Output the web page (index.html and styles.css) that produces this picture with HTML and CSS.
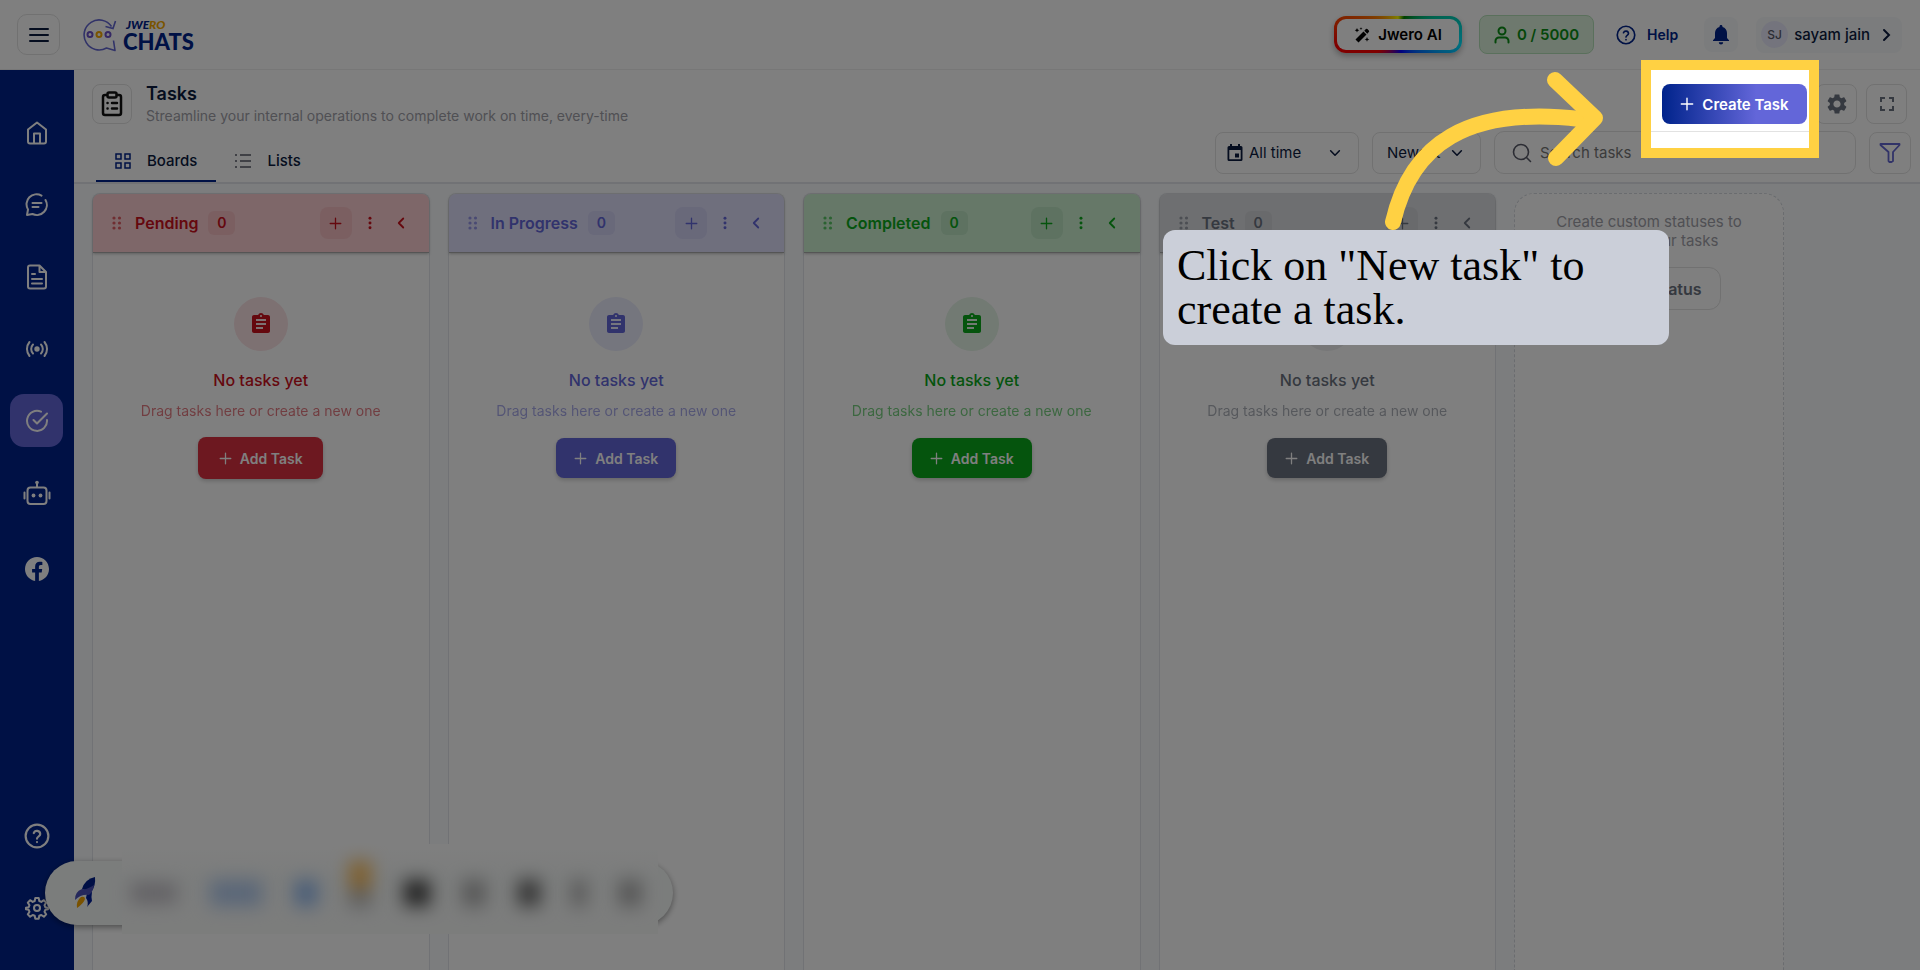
FILE: index.html
```html
<!DOCTYPE html>
<html lang="en">
<head>
  <meta charset="UTF-8">
  <title>Jwero Chats - Tasks</title>
  <link rel="stylesheet" href="styles.css">
</head>
<body>
  <!-- icons -->
  <svg class="sprite" aria-hidden="true">
    <symbol id="i-plus" viewBox="0 0 16 16"><path d="M8 1.500v13M1.500 8h13" fill="none" stroke="currentColor" stroke-width="1.6" stroke-linecap="round"/></symbol>
    <symbol id="i-more" viewBox="0 0 16 16"><circle cx="8" cy="2.600" r="1.700"/><circle cx="8" cy="8" r="1.700"/><circle cx="8" cy="13.400" r="1.700"/></symbol>
    <symbol id="i-left" viewBox="0 0 16 16"><path d="M10 4L6 8l4 4" fill="none" stroke="currentColor" stroke-width="1.600" stroke-linecap="round" stroke-linejoin="round"/></symbol>
    <symbol id="i-down" viewBox="0 0 16 16"><path d="M3 5.500l5 5 5-5" fill="none" stroke="currentColor" stroke-width="1.800" stroke-linecap="round" stroke-linejoin="round"/></symbol>
    <symbol id="i-grip" viewBox="0 0 12 16"><circle cx="3" cy="3" r="1.600"/><circle cx="3" cy="8" r="1.600"/><circle cx="3" cy="13" r="1.600"/><circle cx="8.500" cy="3" r="1.600"/><circle cx="8.500" cy="8" r="1.600"/><circle cx="8.500" cy="13" r="1.600"/></symbol>
    <symbol id="i-clip" viewBox="0 0 24 24"><path d="M19 3h-4.180C14.400 1.840 13.300 1 12 1s-2.400.84-2.820 2H5c-1.100 0-2 .9-2 2v14c0 1.100.9 2 2 2h14c1.100 0 2-.9 2-2V5c0-1.100-.9-2-2-2zm-7 0c.55 0 1 .45 1 1s-.45 1-1 1-1-.45-1-1 .45-1 1-1zm2 14H7v-2h7v2zm3-4H7v-2h10v2zm0-4H7V7h10v2z"/></symbol>
    <symbol id="i-help" viewBox="0 0 24 24"><g fill="none" stroke="currentColor" stroke-width="2" stroke-linecap="round" stroke-linejoin="round"><circle cx="12" cy="12" r="10.500"/><path d="M9 9.300a3.100 3.100 0 0 1 6 .9c0 2-3 2.500-3 4.300M12 17.500v.1"/></g></symbol>
  </svg>

  <header class="app-header">
    <button class="menu-btn" aria-label="Menu">
      <svg width="20" height="16" viewBox="0 0 20 16"><path d="M1 2h18M1 8h18M1 14h18" stroke="#0b1b3f" stroke-width="2" stroke-linecap="round"/></svg>
    </button>
    <a class="logo" href="#">
      <svg width="34" height="36" viewBox="0 0 34 36" fill="none">
        <path d="M28.500 9.500A15 15 0 1 0 23.500 31l8.500 2.500-1.500-10" stroke="#6366d1" stroke-width="1.600" stroke-linejoin="round"/>
        <path d="M22.500 9.500l7.500 2L32.500 4" stroke="#6366d1" stroke-width="1.600"/>
        <circle cx="7" cy="17.500" r="2.500" stroke="#6a50c8" stroke-width="2"/><circle cx="16" cy="17.500" r="2.500" stroke="#f5a800" stroke-width="2"/><circle cx="25" cy="17.500" r="2.500" stroke="#6a50c8" stroke-width="2"/>
      </svg>
      <span class="logo-text"><i>JWE<b>RO</b></i><strong>CHATS</strong></span>
    </a>
    <div class="header-right">
      <button class="ai-btn">
        <svg width="16" height="16" viewBox="0 0 16 16"><path d="M1.500 12.500l8-8 3 3-8 8zM10.300 3.700l1.600-1.600q.7-.7 1.500 0l1.400 1.400q.8.800 0 1.600l-1.500 1.600zM3 1l.7 1.600 1.600.7-1.600.7L3 5.600 2.300 4 .7 3.300l1.600-.7zM7 0l.4 1.200 1.200.4-1.200.4L7 3.200l-.4-1.200-1.200-.4 1.200-.4zM13 10l.7 1.700 1.700.7-1.700.7-.7 1.700-.7-1.700-1.700-.7 1.700-.7z"/></svg>
        Jwero AI
      </button>
      <div class="credits">
        <svg width="16" height="18" viewBox="0 0 16 18" fill="none" stroke="currentColor" stroke-width="2" stroke-linecap="round"><circle cx="8" cy="5" r="3.500"/><path d="M1.500 16.500v-1.500a3.500 3.500 0 0 1 3.500-3.500h6a3.500 3.500 0 0 1 3.500 3.500v1.500"/></svg>
        0 / 5000
      </div>
      <a class="help" href="#"><svg width="20" height="20"><use href="#i-help"/></svg>Help</a>
      <button class="bell" aria-label="Notifications">
        <svg width="18" height="20" viewBox="0 0 18 20"><path d="M9 0c.9 0 1.500.6 1.500 1.500v.4c2.800.7 4.500 3 4.500 6.100v5l2 2.200V16H1v-.8L3 13V8c0-3.100 1.700-5.400 4.500-6.100v-.4C7.500.6 8.100 0 9 0zM6.800 17.300h4.400a2.200 2.200 0 0 1-4.400 0z"/></svg>
      </button>
      <button class="user"><span class="avatar">SJ</span>sayam jain
        <svg width="10" height="16" viewBox="0 0 10 16"><path d="M2 3l5 5-5 5" fill="none" stroke="currentColor" stroke-width="2" stroke-linecap="round"/></svg>
      </button>
    </div>
  </header>

  <div class="layout">
    <nav class="sidebar">
      <a href="#" aria-label="Home"><svg width="22" height="24" viewBox="0 0 22 24"><path d="M2 8.500L11 1.500l9 7v12q0 2-2 2H4q-2 0-2-2zM8 22v-9.500h6V22"/></svg></a>
      <a href="#" aria-label="Chats"><svg width="24" height="24" viewBox="0 0 24 24"><path d="M16.500 2.600A10 10 0 0 0 3 16.500L2 22l5.500-1A10 10 0 0 0 20.500 7M7.500 10h9M7.500 14h6"/></svg></a>
      <a href="#" aria-label="Templates"><svg width="22" height="26" viewBox="0 0 22 26"><path d="M13.500 1.500H4Q2 1.500 2 3.500v19q0 2 2 2h14q2 0 2-2V8zM13.500 1.500V8H20M6 10h3M6 15h10M6 19.500h10"/></svg></a>
      <a href="#" aria-label="Broadcast"><svg width="24" height="24" viewBox="0 0 24 24"><circle cx="12" cy="12" r="1.700" fill="currentColor"/><path d="M8 7.500a6.500 6.500 0 0 0 0 9M16 7.500a6.500 6.500 0 0 1 0 9M4.500 5a11 11 0 0 0 0 14M19.500 5a11 11 0 0 1 0 14"/></svg></a>
      <a href="#" class="active" aria-label="Tasks"><svg width="24" height="24" viewBox="0 0 24 24"><path d="M16 2.700A10 10 0 1 0 22 11M8.500 11l3.500 3.500L22 4.500"/></svg></a>
      <a href="#" aria-label="Bots"><svg width="28" height="26" viewBox="0 0 28 26"><rect x="4.500" y="7.500" width="19" height="16.500" rx="3"/><path d="M14 7V3M1.500 12.500v6M26.500 12.500v6"/><g fill="currentColor" stroke="none"><circle cx="14" cy="2.500" r="1.800"/><circle cx="10.500" cy="15.500" r="1.900"/><circle cx="17.500" cy="15.500" r="1.900"/></g></svg></a>
      <a href="#" class="social" aria-label="Facebook"><svg width="24" height="24" viewBox="0 0 24 24"><path class="solid" d="M24 12.070C24 5.400 18.630 0 12 0S0 5.400 0 12.070C0 18.100 4.390 23.090 10.130 24v-8.440H7.080v-3.490h3.050V9.410c0-3.020 1.790-4.690 4.530-4.690 1.310 0 2.690.23 2.690.23v2.970h-1.520c-1.490 0-1.950.93-1.950 1.890v2.260h3.330l-.53 3.490h-2.800V24C19.610 23.090 24 18.100 24 12.070z"/></svg></a>
      <a href="#" class="bottom" aria-label="Help"><svg width="26" height="26"><use href="#i-help"/></svg></a>
      <a href="#" aria-label="Settings"><svg width="24" height="24" viewBox="0 0 24 24"><circle cx="12" cy="12" r="3"/><path d="M10.300 2h3.400l.6 3 2 .9 2.600-1.700 2.300 2.400-1.700 2.600.8 2 2.700.6v1.400l-2.700.6-.8 2 1.700 2.600-2.300 2.300-2.600-1.700-2 .8-.6 3h-3.400l-.6-3-2-.8-2.600 1.700-2.300-2.300 1.700-2.600-.8-2-2.700-.6v-1.400l2.700-.6.8-2-1.700-2.600 2.300-2.400 2.600 1.700 2-.9z"/></svg></a>
    </nav>

    <main class="main-panel">
      <section class="page-head">
        <div class="page-title">
          <span class="title-icon"><svg width="22" height="26" viewBox="0 0 22 26" fill="none" stroke="currentColor" stroke-width="2.500" stroke-linecap="round" stroke-linejoin="round"><path d="M6 4H4Q2 4 2 6v16q0 2 2 2h14q2 0 2-2V6q0-2-2-2h-2"/><rect x="6.500" y="1.500" width="9" height="5" rx="1.500"/><path d="M6.500 12h.1M11 12h5M6.500 17.500h.1M11 17.500h5"/></svg></span>
          <div>
            <h1>Tasks</h1>
            <p>Streamline your internal operations to complete work on time, every-time</p>
          </div>
        </div>
        <div class="tab-bar">
          <button class="tab-btn active"><svg width="16" height="16" viewBox="0 0 16 16" fill="none" stroke="#00238b" stroke-width="1.500"><rect x="1" y="1" width="5" height="5"/><rect x="10" y="1" width="5" height="5"/><rect x="1" y="10" width="5" height="5"/><rect x="10" y="10" width="5" height="5"/></svg>Boards</button>
          <button class="tab-btn"><svg width="16" height="16" viewBox="0 0 16 16" stroke="#585a68" stroke-width="1.600"><path d="M0 2h2M5 2h11M0 8h2M5 8h11M0 14h2M5 14h11"/></svg>Lists</button>
        </div>
      </section>
      <section class="toolbar">
        <div class="actions">
          <button class="create-btn"><svg width="14" height="14"><use href="#i-plus"/></svg>Create Task</button>
          <button class="icon-btn" aria-label="Task settings"><svg width="20" height="20" viewBox="2 2 20 20"><path fill="#6b7280" d="M19.140 12.940c.04-.3.060-.61.060-.94 0-.32-.02-.64-.07-.94l2.030-1.580c.18-.14.23-.41.12-.61l-1.920-3.320c-.12-.22-.37-.29-.59-.22l-2.390.96c-.5-.38-1.030-.7-1.620-.94l-.36-2.540c-.04-.24-.24-.41-.48-.41h-3.840c-.24 0-.43.170-.47.41l-.36 2.540c-.59.24-1.130.57-1.620.94l-2.390-.96c-.22-.08-.47 0-.59.220L2.740 8.870c-.12.210-.08.470.12.610l2.030 1.580c-.05.3-.09.630-.09.940s.02.640.07.940l-2.030 1.580c-.18.140-.23.410-.12.610l1.920 3.320c.12.220.37.290.59.220l2.390-.96c.5.380 1.030.7 1.620.94l.36 2.540c.05.240.24.410.48.410h3.840c.24 0 .44-.17.47-.41l.36-2.540c.59-.24 1.130-.56 1.620-.94l2.390.96c.22.080.47 0 .59-.22l1.920-3.320c.12-.22.070-.47-.12-.61l-2.010-1.580zM12 15.600c-1.980 0-3.600-1.620-3.600-3.600s1.620-3.600 3.600-3.600 3.600 1.620 3.600 3.600-1.620 3.600-3.600 3.600z"/></svg></button>
          <button class="icon-btn" aria-label="Full screen"><svg width="14" height="14" viewBox="0 0 14 14"><path d="M1 5V1h4M9 1h4v4M13 9v4H9M5 13H1V9" fill="none" stroke="#6b7280" stroke-width="2"/></svg></button>
        </div>
        <div class="filters">
          <button class="range"><svg width="16" height="17" viewBox="0 0 16 17"><path d="M3 0h2v2h6V0h2v2h1q1.500 0 1.500 1.500v12Q15.500 17 14 17H2Q.5 17 .5 15.500v-12Q.5 2 2 2h1zM2.300 6v9.200h11.400V6zM8 9.500h4v4H8z" fill-rule="evenodd"/></svg><span>All time</span><svg width="14" height="14"><use href="#i-down"/></svg></button>
          <button class="sort"><span>Newest</span><svg width="14" height="14"><use href="#i-down"/></svg></button>
          <label class="search"><svg width="20" height="20" viewBox="0 0 20 20" fill="none" stroke="#585a68" stroke-width="1.600" stroke-linecap="round"><circle cx="9" cy="9" r="7.500"/><path d="M14.500 14.500l4 4"/></svg><input type="text" placeholder="Search tasks" aria-label="Search tasks"></label>
          <button class="filter-btn" aria-label="Filter"><svg width="22" height="20" viewBox="0 0 22 20"><path d="M1.500 1h19v1l-6.500 7v9l-1.500 1h-2l-1-1V9L1.500 2z" fill="none" stroke="#6366d1" stroke-width="1.800" stroke-linejoin="round"/></svg></button>
        </div>
      </section>

      <section class="board">
        <article class="column red">
          <header><svg class="grip" width="12" height="16"><use href="#i-grip"/></svg><h2>Pending</h2><span class="count">0</span><button class="add" aria-label="Add"><svg width="13" height="13"><use href="#i-plus"/></svg></button><button aria-label="More"><svg width="14" height="14"><use href="#i-more"/></svg></button><button aria-label="Collapse"><svg width="18" height="18"><use href="#i-left"/></svg></button></header>
          <div class="empty"><span class="disc"><svg width="24" height="24"><use href="#i-clip"/></svg></span><h3>No tasks yet</h3><p>Drag tasks here or create a new one</p><button><svg width="13" height="13"><use href="#i-plus"/></svg>Add Task</button></div>
        </article>
        <article class="column violet">
          <header><svg class="grip" width="12" height="16"><use href="#i-grip"/></svg><h2>In Progress</h2><span class="count">0</span><button class="add" aria-label="Add"><svg width="13" height="13"><use href="#i-plus"/></svg></button><button aria-label="More"><svg width="14" height="14"><use href="#i-more"/></svg></button><button aria-label="Collapse"><svg width="18" height="18"><use href="#i-left"/></svg></button></header>
          <div class="empty"><span class="disc"><svg width="24" height="24"><use href="#i-clip"/></svg></span><h3>No tasks yet</h3><p>Drag tasks here or create a new one</p><button><svg width="13" height="13"><use href="#i-plus"/></svg>Add Task</button></div>
        </article>
        <article class="column green">
          <header><svg class="grip" width="12" height="16"><use href="#i-grip"/></svg><h2>Completed</h2><span class="count">0</span><button class="add" aria-label="Add"><svg width="13" height="13"><use href="#i-plus"/></svg></button><button aria-label="More"><svg width="14" height="14"><use href="#i-more"/></svg></button><button aria-label="Collapse"><svg width="18" height="18"><use href="#i-left"/></svg></button></header>
          <div class="empty"><span class="disc"><svg width="24" height="24"><use href="#i-clip"/></svg></span><h3>No tasks yet</h3><p>Drag tasks here or create a new one</p><button><svg width="13" height="13"><use href="#i-plus"/></svg>Add Task</button></div>
        </article>
        <article class="column gray">
          <header><svg class="grip" width="12" height="16"><use href="#i-grip"/></svg><h2>Test</h2><span class="count">0</span><button class="add" aria-label="Add"><svg width="13" height="13"><use href="#i-plus"/></svg></button><button aria-label="More"><svg width="14" height="14"><use href="#i-more"/></svg></button><button aria-label="Collapse"><svg width="18" height="18"><use href="#i-left"/></svg></button></header>
          <div class="empty"><span class="disc"><svg width="24" height="24"><use href="#i-clip"/></svg></span><h3>No tasks yet</h3><p>Drag tasks here or create a new one</p><button><svg width="13" height="13"><use href="#i-plus"/></svg>Add Task</button></div>
        </article>
        <aside class="new-status">
          <p>Create custom statuses to organize your tasks</p>
          <button>Create Status</button>
        </aside>
      </section>
    </main>
  </div>

  <!-- floating dock -->
  <div class="dock">
    <svg class="rocket" width="24" height="34" viewBox="0 0 24 34">
      <path d="M14 17l5-1q-1 5 0 9l-5 6q2-5-1-9z" fill="#001f9b"/>
      <path d="M9 13Q12 3 22 1q1 9-4 15z" fill="#001f8b"/>
      <path d="M2 24q-.5-8 7-11 5 1 12-4-1 7-5 10-8-1-14 5z" fill="#4a50b8"/>
      <path d="M4 32q-1-7 4-11 4-1 4 2-1 4-8 9z" fill="#f5a500"/>
    </svg>
    <div class="dock-blur"><i class="b1"></i><i class="b2"></i><i class="b3"></i><i class="b4"></i><i class="b5"></i><i class="b6"></i><i class="b7"></i><i class="b8"></i><i class="b9"></i></div>
  </div>

  <!-- guide overlay -->
  <div class="spotlight"></div>
  <svg class="arrow" width="230" height="170" viewBox="0 0 230 170" fill="none" stroke="#ffd143" stroke-width="16" stroke-linecap="round" stroke-linejoin="round"><path d="M18 156C36 78 92 40 205 53"/><path d="M180 14L220 52L181 92"/></svg>
  <div class="callout">Click on "New task" to create a task.</div>
</body>
</html>
```
FILE: styles.css
```css
* { box-sizing: border-box; }
body { font-family: Inter, 'Noto Sans', sans-serif; background: #fff; margin: 0; height: 100vh; overflow: hidden; display: flex; flex-direction: column; color: #0b1b3f; font-size: 16px; position: relative; }
h1, h2, h3, p { margin: 0; }
button { font: inherit; color: inherit; background: none; border: none; padding: 0; cursor: pointer; display: flex; align-items: center; justify-content: center; }
a { color: inherit; text-decoration: none; }
svg { flex: none; }
svg:not([fill]) { fill: currentColor; }
.sprite { position: absolute; width: 0; height: 0; }

/* header */
.app-header { height: 70px; display: flex; align-items: center; padding: 0 18px 0 17px; border-bottom: 1px solid #eee; flex: none; }
.menu-btn { width: 43px; height: 41px; border: 1px solid #e2e2e2; border-radius: 10px; }
.logo { display: flex; align-items: center; gap: 6px; margin-left: 23px; }
.logo-text { display: flex; flex-direction: column; gap: 1px; color: #00238b; font-family: Lato, sans-serif; }
.logo-text i { font-size: 12px; line-height: 13px; font-weight: 900; margin-left: 3px; }
.logo-text b { color: #f5a800; font-weight: 900; }
.logo-text strong { font-size: 22px; line-height: 20px; font-weight: 900; }
.header-right { margin-left: auto; display: flex; align-items: center; }
.ai-btn { width: 128px; height: 37px; gap: 8px; border: 3px solid transparent; border-radius: 12px; color: #000; font-weight: 600; font-size: 15px; background: linear-gradient(#fff, #fff) padding-box, conic-gradient(from 0deg, #ff0, green 20deg, #00c8a0 65deg, #00e0ff 100deg, #08f 120deg, #00f 170deg, #f00 230deg, #f00 260deg, #ff6a00 300deg, #ff0) border-box; box-shadow: 0 3px 6px rgba(0,0,0,0.3); }
.credits { width: 115px; height: 39px; margin-left: 17px; display: flex; align-items: center; justify-content: center; gap: 7px; color: #0a8f14; background: #dcf2dd; border: 1px solid #b5e0b8; border-radius: 8px; font-weight: 600; font-size: 15px; }
.help { display: flex; align-items: center; gap: 11px; margin-left: 22px; color: #00238b; font-weight: 600; font-size: 14px; }
.bell { width: 34px; height: 35px; margin-left: 26px; background: #f7f9fa; border-radius: 8px; color: #00238b; }
.user { height: 36px; margin-left: 18px; padding: 0 10px 0 5px; gap: 6px; background: #f7f9fa; border-radius: 8px; font-weight: 500; font-size: 15px; }
.user svg { margin-left: 6px; }
.avatar { width: 27px; line-height: 27px; border-radius: 50%; background: #e9e9fb; color: #585a68; font-size: 12px; }

/* sidebar */
.layout { flex: 1; display: flex; min-height: 0; }
.sidebar { width: 74px; background: #00238b; color: #fff; display: flex; flex-direction: column; gap: 19px; padding: 36px 10px; }
.sidebar a { width: 53px; height: 53px; border-radius: 14px; display: flex; align-items: center; justify-content: center; }
.sidebar svg { fill: none; stroke: currentColor; stroke-width: 2; stroke-linecap: round; stroke-linejoin: round; }
.sidebar .solid { fill: currentColor; stroke: none; }
.sidebar .active { background: #6366d9; }
.sidebar .social { margin-top: 4px; }
.sidebar .bottom { margin-top: auto; }

/* page head */
.main-panel { flex: 1; min-width: 0; display: grid; grid-template-columns: 1fr 720px; grid-template-rows: 114px 1fr; }
.page-head, .toolbar { border-bottom: 2px solid #e2e5ea; }
.page-head { display: flex; flex-direction: column; justify-content: space-between; padding: 12px 0 0 18px; }
.page-title { display: flex; gap: 14px; }
.title-icon { width: 40px; height: 40px; margin-top: 2px; border: 1px solid #e2e2e2; border-radius: 8px; display: flex; align-items: center; justify-content: center; color: #111; }
h1 { font-size: 18px; line-height: 24px; font-weight: 600; }
.page-title p { font-size: 14px; line-height: 20px; color: #a0a0a8; }
.tab-bar { display: flex; padding-left: 4px; }
.tab-btn { height: 44px; gap: 16px; padding: 3px 19px 0; font-size: 15px; font-weight: 500; border-bottom: 2px solid transparent; }
.tab-btn.active { border-color: #00238b; }
.toolbar { padding: 14px 9px 0 0; }
.actions { display: flex; justify-content: flex-end; gap: 9px; padding-right: 4px; }
.create-btn { width: 145px; height: 40px; gap: 8px; border-radius: 8px; color: #fff; font-weight: 600; font-size: 15px; background: linear-gradient(90deg, #00238b, #6366d9 65%); }
.icon-btn { width: 41px; height: 40px; border: 1px solid #e2e2e2; border-radius: 8px; }
.filters { display: flex; gap: 13px; margin-top: 7px; justify-content: flex-end; align-items: center; font-size: 15px; }
.filters button { border: 1px solid #e2e2e2; border-radius: 8px; height: 42px; }
.filters .range { width: 144px; gap: 6px; padding: 0 16px 0 11px; }
.filters .sort { width: 109px; padding: 0 16px 0 14px; }
.range span, .sort span { margin-right: auto; }
.search { display: flex; align-items: center; gap: 6px; width: 362px; height: 43px; padding: 0 17px; border: 1px solid #e2e2e2; border-radius: 10px; }
.search input { border: none; outline: none; background: none; width: 100%; font: inherit; }
.search input::placeholder { color: #777; }
.filters .filter-btn { width: 42px; }

/* board */
.board { grid-column: 1 / -1; background: #f8fafc; display: flex; gap: 18px; padding: 9px 136px 0 18px; min-height: 0; }
.column { flex: 1; background: #fff; border: 1px solid #e2e5ea; border-bottom: none; border-radius: 8px 8px 0 0; color: var(--c); }
.column header { height: 59px; display: flex; align-items: center; padding: 0 19px 0 18px; background: var(--head); border-radius: 7px 7px 0 0; border-bottom: 1px solid #aaa; box-shadow: 0 1px 3px rgba(0,0,0,0.25); }
.grip { opacity: 0.6; }
.column h2 { font-size: 16px; font-weight: 600; margin-left: 12px; }
.count { font-size: 14px; font-weight: 600; width: 27px; line-height: 24px; text-align: center; border-radius: 6px; background: var(--chip); margin-left: 10px; }
.column header button { margin-left: 11px; }
.column header .add { width: 32px; height: 32px; border-radius: 8px; background: var(--chip); margin-left: auto; }
.column header .add + button + button { margin-left: 15px; }
.empty { display: flex; flex-direction: column; align-items: center; padding-top: 44px; }
.disc { width: 54px; height: 54px; border-radius: 50%; background: var(--disc); display: flex; align-items: center; justify-content: center; }
.empty h3 { font-size: 16px; line-height: 24px; font-weight: 500; margin-top: 17px; }
.empty p { font-size: 14px; line-height: 20px; margin-top: 9px; opacity: 0.55; }
.empty button { width: 120px; height: 40px; gap: 8px; margin-top: 17px; border-radius: 8px; background: var(--btn); color: #fff; font-size: 14px; font-weight: 600; box-shadow: 0 2px 4px rgba(0,0,0,0.2); }
.red { --c: #cb101d; --btn: #da3040; --head: #fccfd2; --chip: #f6bfc3; --disc: #fbe2e5; }
.red .empty button { width: 125px; height: 42px; margin-top: 16px; }
.violet { --c: #6366d9; --btn: #6366d9; --head: #dfdefb; --chip: #d2d2f5; --disc: #ebecfc; }
.green { --c: #0aa81a; --btn: #0aa81a; --head: #ccf0d1; --chip: #bce4c2; --disc: #e4f4e6; }
.gray { --c: #6b7280; --btn: #6b7280; --head: #dddfe2; --chip: #d3d5d9; --disc: #eeeff1; }
.new-status { width: 270px; background: #fff; border: 1px dashed #d4d8de; border-bottom: none; border-radius: 20px 20px 0 0; display: flex; flex-direction: column; align-items: center; padding: 18px 30px; }
.new-status p { font-size: 15px; line-height: 19px; text-align: center; color: #a0a0a8; }
.new-status button { height: 43px; padding: 0 18px; margin-top: 17px; border: 1px solid #e2e2e2; border-radius: 12px; font-weight: 600; color: #6b7280; }

/* dock */
.dock { position: absolute; left: 45px; bottom: 45px; width: 628px; height: 64px; border-radius: 32px; background: #f7faf9; box-shadow: 0 2px 6px rgba(0,0,0,0.4); display: flex; align-items: center; padding: 0 15px 0 28px; }
.dock-blur { display: flex; align-items: center; justify-content: space-between; flex: 1; height: 90px; margin: 0 0 8px 25px; background: linear-gradient(#fff, #f7faf9 40%, #f9faf9); padding: 8px 17px 0 9px; }
.dock-blur i { width: 22px; height: 26px; background: #aaa; filter: blur(9px); }
.dock-blur .b1 { width: 46px; height: 20px; background: #c4c1c8; }
.dock-blur .b2 { width: 52px; background: #b4cdf0; }
.dock-blur .b3 { background: #8fb8f0; }
.dock-blur .b4 { height: 46px; margin-bottom: 18px; background: linear-gradient(#ffc05c 60%, #bbb 60%); }
.dock-blur .b5 { width: 26px; background: #444; }
.dock-blur .b7 { background: #666; }
.dock-blur .b8 { width: 14px; }

/* guide */
.spotlight { position: absolute; top: 60px; right: 101px; width: 178px; height: 98px; border: 10px solid #ffd143; box-shadow: 0 0 0 2400px rgba(0,0,0,0.5); }
.arrow { position: absolute; top: 66px; right: 315px; }
.callout { position: absolute; top: 230px; right: 251px; width: 506px; height: 115px; padding: 14px; border-radius: 12px; background: #cbcfd9; color: #000; font-family: 'Liberation Serif', serif; font-size: 44px; line-height: 44px; }
```
